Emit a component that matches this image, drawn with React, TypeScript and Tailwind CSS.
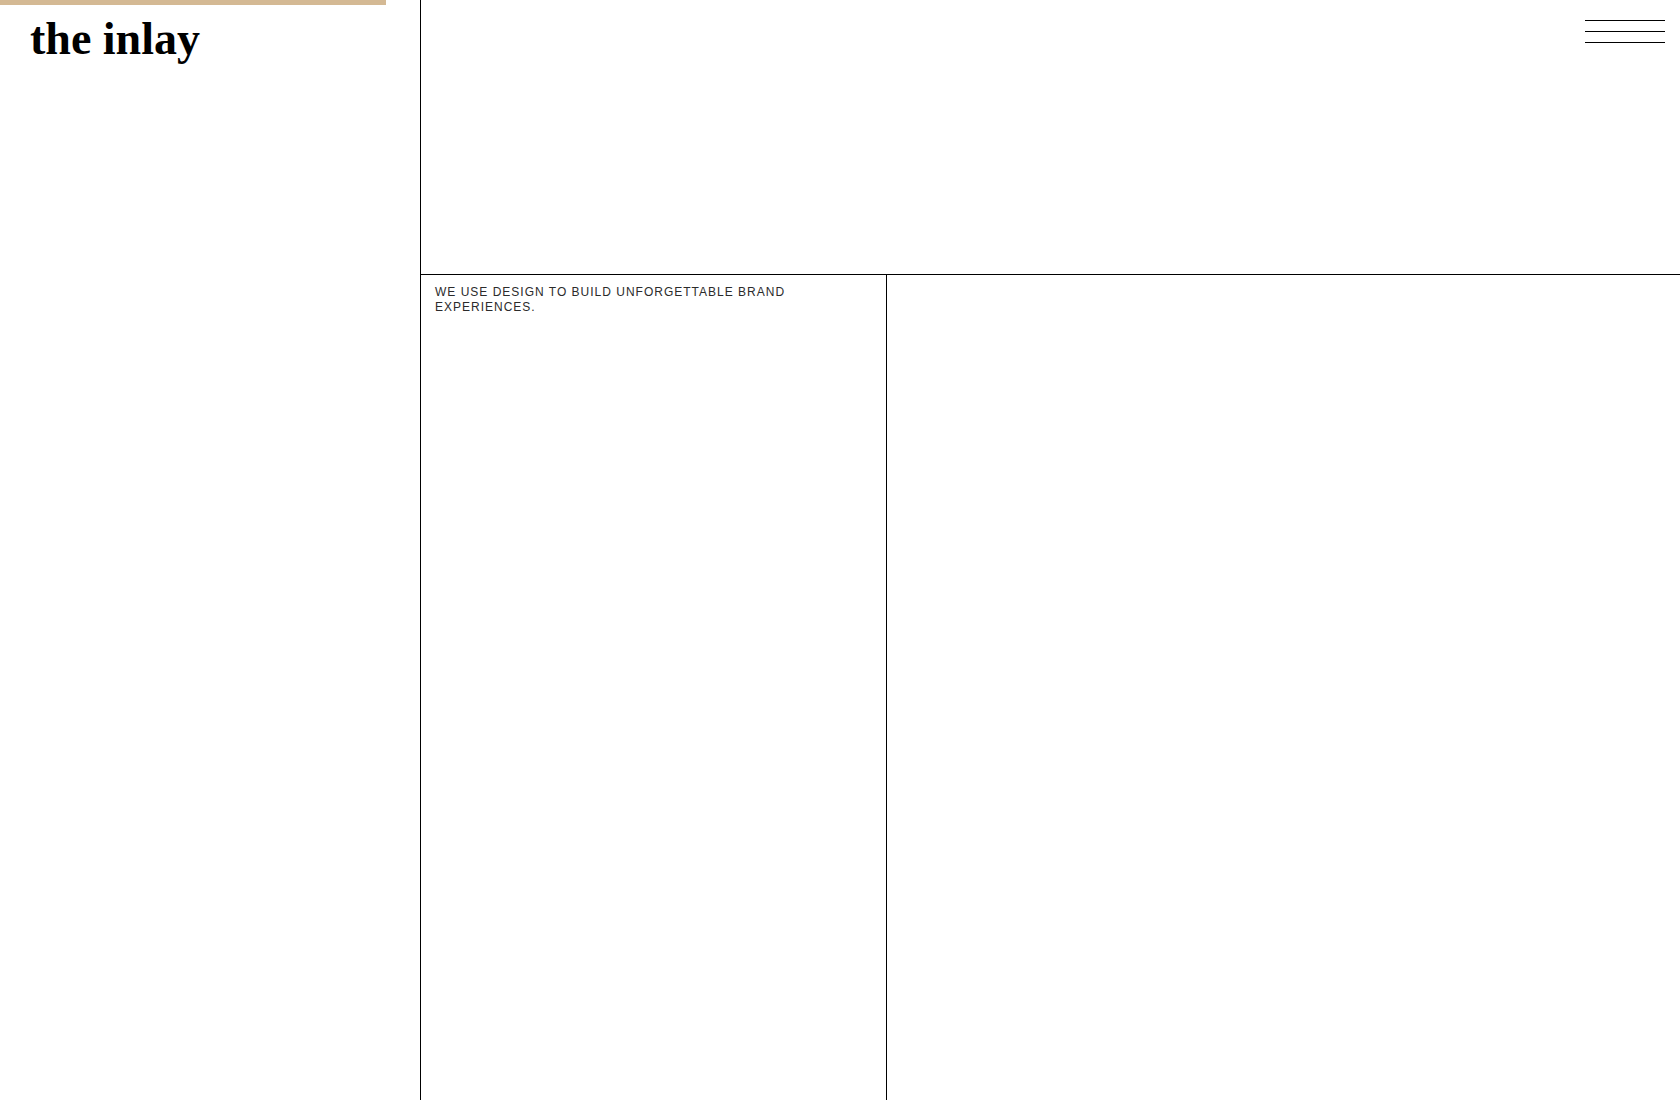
// Landing page for the inlay: a ruled grid with logo, menu and tagline

const SCROLL_PROGRESS = 23;

function ProgressBar({ value }: { value: number }) {
  return (
    <div
      role="progressbar"
      aria-label="Page progress"
      aria-valuenow={value}
      className="absolute left-0 top-0 h-[5px] bg-[#d4b994]"
      style={{ width: `${value}%` }}
    />
  );
}

function MenuButton() {
  return (
    <button type="button" aria-label="Open menu" className="flex w-20 flex-col gap-2.5 cursor-pointer">
      <span className="h-px w-full bg-black" />
      <span className="h-px w-full bg-black" />
      <span className="h-px w-full bg-black" />
    </button>
  );
}

export default function App() {
  return (
    <div className="relative flex min-h-screen bg-white text-black">
      <ProgressBar value={SCROLL_PROGRESS} />

      {/* Logo column */}
      <aside className="w-1/4 shrink-0 px-[30px] pt-[15px]">
        <a href="#" className="font-['Liberation_Serif',serif] text-[46px] leading-[48px] font-bold">
          the inlay
        </a>
      </aside>

      <div className="flex flex-1 flex-col border-l border-black">
        <header className="flex h-[25vh] items-start justify-end border-b border-black px-[15px] pt-5">
          <MenuButton />
        </header>

        {/* Tagline + content */}
        <main className="flex flex-1">
          <section className="w-[37%] border-r border-black px-3.5 pt-2.5">
            <p className="font-['Liberation_Sans',sans-serif] text-[12px] leading-[15px] tracking-[1px] text-[#2b2b2b] uppercase">
              We use design to build unforgettable brand experiences.
            </p>
          </section>
          <section className="flex-1" />
        </main>
      </div>
    </div>
  );
}
